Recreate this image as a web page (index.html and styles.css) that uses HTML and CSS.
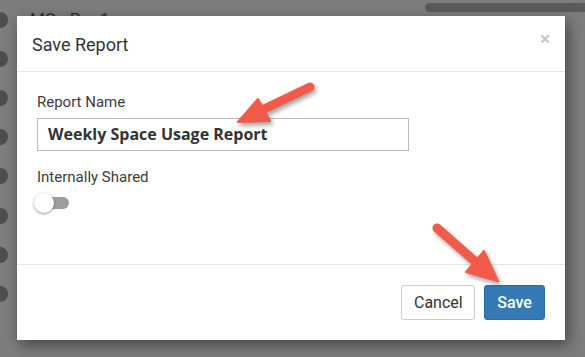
FILE: index.html
```html
<!DOCTYPE html>
<html lang="en">
<head>
  <meta charset="UTF-8" />
  <title>Save Report</title>
  <link rel="stylesheet" href="styles.css">
</head>
<body>

  <!-- page behind the dimmed backdrop -->
  <div class="page">
    <div class="page-list">
      <div class="page-row"><span class="dot"></span><span class="row-name">MO - Pro 1</span></div>
      <div class="page-row"><span class="dot"></span></div>
      <div class="page-row"><span class="dot"></span></div>
      <div class="page-row"><span class="dot"></span></div>
      <div class="page-row"><span class="dot"></span></div>
      <div class="page-row"><span class="dot"></span></div>
      <div class="page-row"><span class="dot"></span></div>
      <div class="page-row"><span class="dot"></span></div>
    </div>
    <div class="page-bar"></div>
  </div>

  <div class="modal">
    <div class="modal-header">
      <h4>Save Report</h4>
      <span class="close">&times;</span>
    </div>
    <div class="modal-body">
      <label class="field-label">Report Name</label>
      <div class="text-input">Weekly Space Usage Report</div>
      <label class="field-label shared-label">Internally Shared</label>
      <div class="toggle"><span class="track"></span><span class="knob"></span></div>
    </div>
    <div class="modal-footer">
      <button class="btn btn-default">Cancel</button>
      <button class="btn btn-primary">Save</button>
    </div>
  </div>

  <!-- annotation arrows -->
  <svg class="arrows" width="585" height="357" viewBox="0 0 585 357">
    <g class="arrow">
      <line x1="310" y1="87" x2="262" y2="110" />
      <polygon points="238,122 258,99 270,121" />
    </g>
    <g class="arrow">
      <line x1="437" y1="228" x2="478" y2="264" />
      <polygon points="498,281 484,251 466,272" />
    </g>
  </svg>

</body>
</html>
```

FILE: styles.css
```css
body {
  margin: 0;
  width: 585px;
  height: 357px;
  overflow: hidden;
  background: #7d7d7d;
  font-family: Roboto, 'Liberation Sans', sans-serif;
  color: #333;
  position: relative;
}
.page { display: flex; justify-content: space-between; }
.page-list { padding-top: 0; }
.page-row { display: flex; align-items: center; height: 39.2px; }
.dot {
  width: 16px; height: 16px; border-radius: 50%;
  background: #4e4e4e; margin-left: -8px;
}
.row-name { margin-left: 22px; font-size: 17px; color: #2f2f2f; margin-top: -2px; }
.page-bar {
  width: 170px; height: 9px; margin-top: 3px; margin-right: -10px;
  border-radius: 5px; background: #5b5b5b;
}

/* dialog */
.modal {
  position: absolute;
  left: 17px; top: 16px;
  width: 548px; height: 324px;
  background: #fff;
  box-shadow: 3px 5px 14px rgba(0,0,0,0.45);
  display: flex; flex-direction: column;
}
.modal-header {
  height: 56px; box-sizing: border-box;
  padding: 0 15px;
  border-bottom: 1px solid #e5e5e5;
  display: flex; align-items: center; justify-content: space-between;
}
.modal-header h4 { margin: 0; font-size: 18px; font-weight: 400; color: #333; padding-top: 1px; }
.close { color: #c8c8c8; font-size: 19px; font-weight: bold; margin-top: -11px; margin-right: 0; }
.modal-body {
  flex: 1;
  padding: 20px;
  border-bottom: 1px solid #e5e5e5;
  display: flex; flex-direction: column; align-items: flex-start;
}
.field-label { font-size: 15px; color: #3c3c3c; line-height: 20px; margin-bottom: 6px; }
.shared-label { margin-top: 16px; margin-bottom: 6px; }
.text-input {
  width: 372px; height: 33px; box-sizing: border-box;
  border: 1px solid #b9b9b9;
  padding: 0 10px;
  font-family: 'Open Sans', sans-serif; font-weight: 700; font-size: 16px;
  color: #333; line-height: 31px;
}
.toggle { position: relative; width: 36px; height: 20px; margin-left: -3px; }
.toggle .track {
  position: absolute; left: 6px; top: 4px;
  width: 29px; height: 12px; border-radius: 6px; background: #9e9e9e;
}
.toggle .knob {
  position: absolute; left: 0; top: 0;
  width: 20px; height: 20px; border-radius: 50%;
  background: #fff; box-shadow: 0 1px 3px rgba(0,0,0,0.4);
}
.modal-footer {
  height: 75px; box-sizing: border-box;
  padding: 20px 20px 20px;
  display: flex; justify-content: flex-end; gap: 9px;
}
.btn {
  height: 35px; padding: 0 12px;
  font-family: Roboto, sans-serif; font-size: 16px;
  border-radius: 3px; border: 1px solid #ccc;
}
.btn-default { width: 74px; background: #fff; color: #333; }
.btn-primary { width: 61px; background: #337ab7; border-color: #2e6da4; color: #fff; font-weight: 500; }

/* arrows */
.arrows { position: absolute; left: 0; top: 0; }
.arrow { filter: drop-shadow(2px 3px 2px rgba(0,0,0,0.35)); }
.arrow line { stroke: #f25a4a; stroke-width: 9; stroke-linecap: round; }
.arrow polygon { fill: #f25a4a; stroke: #f25a4a; stroke-width: 2; stroke-linejoin: round; }
```
